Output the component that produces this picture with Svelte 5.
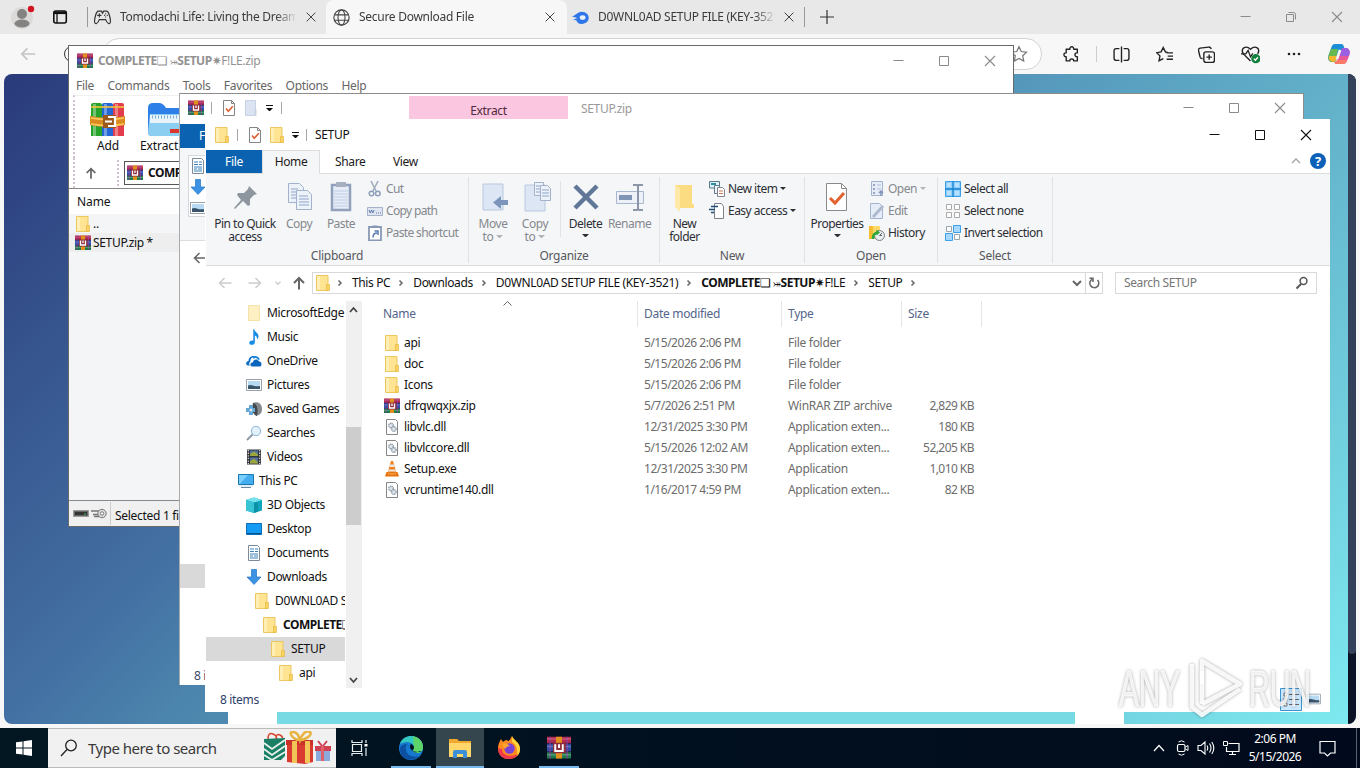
<script>
  const svg = {
    folder: '<path d="M1.500.500h11.500v15H1.500z" fill="#ffe493" stroke="#ecc75e"/><path d="M2 1h3v14H2z" fill="#ffeeb5"/><path d="M11.500 9.500h3v6h-3z" fill="#fbd365" stroke="#e6b840" stroke-width=".7"/>',
    folderPale: '<path d="M2.500.500h11v15h-11z" fill="#fff0c4" stroke="#f5e2ab"/>',
    folderGray: '<path d="M2.500.500h10v15h-10z" fill="#dce4f3" stroke="#c6d2e6"/><path d="M11.500 9h2v6.500h-2z" fill="#c6d2e6"/>',
    rar: '<path fill="#b3294f" d="M0 .500h16v4.500H0z"/><path fill="#2d4fa6" d="M0 5h16v5.500H0z"/><path fill="#1f7a4c" d="M0 10.500h16v4.500H0z"/><path d="M0 5h16M0 10.500h16" stroke="#2c1840" stroke-opacity=".6"/><path d="M2 .500v14.500M13.500.500v14.500" stroke="#8d3aa0" stroke-opacity=".7"/><path d="M0 2h16M0 7h16M0 12.500h16" stroke="#fff" stroke-opacity=".22"/><path fill="#e0901d" d="M6 .500h4v14.500H6z"/><path fill="#8f2d3c" d="M4 4.500h8.500v7H4z"/><path d="M5.500 5.500v4.500h5V5.500M8 5.500v2.500" fill="none" stroke="#fff" stroke-width="1.300"/>',
    check: '<path d="M2.500.500h8l3 3v12h-11z" fill="#fff" stroke="#858585"/><path d="M10.500.500v3h3" fill="none" stroke="#858585"/><path d="M5 8.500l2.300 2.700 4.500-5" fill="none" stroke="#dd6037" stroke-width="1.700"/>',
    music: '<path d="M8 0c.5 3 5 4 4.500 7.500-.2 1.500-.8 2.400-1.400 3 .3-2-.7-3.400-2.200-4V13c0 4-6.200 3.400-5.600.5.300-1.800 2.600-2.500 4-1.800V0z" fill="#168ce5"/>',
    onedrive: '<path d="M2 12.500C-.8 11.700-.3 8.500 2.500 8c0-3 3-6 6.500-4.500C5 4 4 7 4.500 8.500 2.800 9.500 3 12 4 12.500z" fill="#0d6fc5"/><path d="M6 13.500c-2.500-.8-2-4.300 1-4.300.2-3 4.400-3.700 5.800-1 2.500 0 3.800 3.600 1.500 5.300z" fill="#0b65bd"/><path d="M7 5c2-2 5-1 6 1.700" fill="none" stroke="#1883d7" stroke-width="2"/>',
    pictures: '<path d="M.5 2.500h15v11H.5z" fill="#fff" stroke="#98a1aa"/><path d="M2 4h12v8H2z" fill="#b7daf2"/><path d="M2 8.500c4-2 6 2 12 .500v3H2z" fill="#39536a"/>',
    games: '<path d="M7 2c5-2 9 1 9 6s-3 6-6 7z" fill="#858a8f"/><path d="M7 2c2 0 6 3 4 13C8 14 6 11 6 7z" fill="#43494f"/><path d="M0 7h3V4h4v3h2v4H7v3H3v-3H0z" fill="#67a7d4"/><circle cx="5" cy="9" r="1.500" fill="#d2e7f6"/>',
    searches: '<path d="M1 15l6-6" stroke="#8c98a3" stroke-width="1.800"/><circle cx="10" cy="6" r="4.700" fill="#dff0fb" stroke="#8ab5d6"/><path d="M8 5a3 3 0 0 1 3-2" fill="none" stroke="#fff"/>',
    videos: '<path d="M1 .500h14v15H1z" fill="#30353c"/><path d="M4 1.500h8V7H4zM4 8.500h8v6H4z" fill="#52739f"/><path d="M4 5l4-2.500 4 3V7H4zM4 12.500l4-3 4 4v1H4z" fill="#9da63b"/><path d="M2.300 1v14M13.700 1v14" stroke="#e5e5e5" stroke-width="1.200" stroke-dasharray="1.300 1.300"/>',
    pc: '<path d="M.5 1.500h15v10H.5z" fill="#42aef1" stroke="#1978b4"/><path d="M1 2h9l-8 9H1z" fill="#79cdfb"/><path d="M3 14.500h10" stroke="#65889e"/><path d="M1 13h14" stroke="#c8dbe6"/>',
    cube: '<path d="M0 3l8-2.500L16 3v10.500L8 16l-8-2.500z" fill="#10a5bd"/><path d="M0 3l8-2.500L16 3 8 5.500z" fill="#75e4ee"/><path d="M0 3l8 2.500V16l-8-2.500z" fill="#38c4d5"/><path d="M8 5.500h4v9l-4 1.500z" fill="#0b90a8"/>',
    desktop: '<path d="M.5 2.500h15v11H.5z" fill="#169bf5" stroke="#0d6eb5"/><path d="M1 12h14v1H1z" fill="#07558f"/>',
    documents: '<path d="M2.500.500h9l2 2v13h-11z" fill="#fff" stroke="#7d8b98"/><path d="M4 4h4M9 4h3M4 6.500h4M9 6.500h3M4 9h8M4 11h3M8 11h4M4 13h8" stroke="#3982bd"/>',
    downloads: '<path d="M5.500.500h5v7.500H15l-7 7.500L1 8h4.500z" fill="#3c92e4" stroke="#2275c6" stroke-width=".7"/>',
    dll: '<path d="M2.500.500h9l2 2v13h-11z" fill="#fff" stroke="#858585"/><circle cx="7" cy="6.500" r="2.300" fill="#dfe5ea" stroke="#8998a6" stroke-width="1.300" stroke-dasharray="1.200 .5"/><circle cx="9.800" cy="10" r="2.300" fill="#dfe5ea" stroke="#8998a6" stroke-width="1.300" stroke-dasharray="1.200 .5"/>',
    vlc: '<path d="M7 0h2l3.500 12H3.500z" fill="#f3801c"/><path d="M6 3.500h4l.7 2.500H5.300zM4.700 8.500h6.600l.6 2H4.100z" fill="#e9e9e9"/><path d="M2.500 11h11l1.500 4.500H1z" fill="#e9730d"/><path d="M4 12c2 1.500 6 1.500 8 0" fill="none" stroke="#ffb164"/>',
    cut: '<path d="M4 0l5 10M11 0L6 10" stroke="#a3aebd" stroke-width="1.600"/><circle cx="4.500" cy="12.500" r="2.300" fill="none" stroke="#8e9ebd" stroke-width="1.500"/><circle cx="10.800" cy="12.500" r="2.300" fill="none" stroke="#8e9ebd" stroke-width="1.500"/>',
    path: '<path d="M.5 4.500h15v8H.5z" fill="#dfe6f2" stroke="#a4b3cb"/><path d="M2 7l1.300 3 1.200-3 1.300 3L7 7M9 10h1M11 10h1M13 10h1" fill="none" stroke="#617aa8"/>',
    shortcut: '<path d="M2 2h12v13.500H2z" fill="#fff" stroke="#8899b4" stroke-width="1.800"/><path d="M5.500.500h5v2h-5z" fill="#8899b4"/><path d="M6 12.500c0-3 1-4.500 4-4.500M7.500 6h3.500v4" fill="none" stroke="#5a78ae" stroke-width="1.500"/>',
    newitem: '<path d="M.500.500h10v6.500H.500z" fill="#dff1fb" stroke="#5b7887"/><path d="M2 3h5" stroke="#2b8e9b" stroke-width="2"/><path d="M5.500 4.500h5v8h-5z" fill="#eef5fb" stroke="#647a8f"/><path d="M8.500 6.500h5l2 2v7h-7z" fill="#fff" stroke="#85898f"/><path d="M10 10h4M10 12.500h4" stroke="#c9765c"/>',
    easy: '<path d="M5.500.500h7l2 3v12h-9z" fill="#fff" stroke="#7c8287"/><path d="M2 3.500h7M0 6.500h6M2 9.500h3" stroke="#234d73" stroke-width="1.500"/>',
    open: '<path d="M2.500.500h11v14h-11z" fill="#e7edf8" stroke="#a5b4ce"/><path d="M4 3h2v2H4zM4 7h2v2H4zM4 11h2v2H4z" fill="#96a6c4"/><path d="M8 4h4M8 8h4" stroke="#b1bed5"/><path d="M12 15v-5m-2 2l2-2 2 2" fill="none" stroke="#8396ba" stroke-width="1.500"/>',
    edit: '<path d="M1.500.500h9l3 3v12h-12z" fill="#e7edf8" stroke="#a5b4ce"/><path d="M4 14L14 3" stroke="#adb9cc" stroke-width="3"/>',
    history: '<path d="M0 1h11v13H0z" fill="#ffd968"/><path d="M0 1h4v13H0z" fill="#f4bd31"/><circle cx="10.500" cy="10.500" r="5" fill="#e9edf0" stroke="#778087"/><path d="M10.500 10.500l2.500-2.500M10.500 10.500h2.500" fill="none" stroke="#5c6a74"/><path d="M4 14c0-4 1.500-6 4.500-6" fill="none" stroke="#2da63a" stroke-width="2.600"/><path d="M7.500 4.500l3.500 3-3.500 3z" fill="#2da63a"/>',
    selall: '<path d="M.500.500h15v15H.500z" fill="#8dcdff" stroke="#3ba0e8"/><path d="M8 0v16M0 8h16" stroke="#1181cc" stroke-width="1.300"/><path d="M2 2h4v4H2zM10 2h4v4h-4zM2 10h4v4H2zM10 10h4v4h-4z" fill="#b9e1ff"/>',
    selnone: '<g fill="#fff" stroke="#aaa"><path d="M1.500 1.500h5v5h-5zM9.500 1.500h5v5h-5zM1.500 9.500h5v5h-5zM9.500 9.500h5v5h-5z"/></g>',
    selinv: '<g fill="#fff" stroke="#9aa5ae"><path d="M1.500 1.500h5v5h-5zM9.500 9.500h5v5h-5z"/></g><g fill="#a6d7fc" stroke="#3ba0e8"><path d="M8.500.500h7v7h-7zM.500 8.500h7v7h-7z"/></g>',
    up: '<path d="M8 14.500V3M3 8l5-5 5 5" fill="none" stroke="#666" stroke-width="2"/>',
    left: '<path d="M14.500 8H2.500M7.500 3l-5 5 5 5" fill="none" stroke="currentColor" stroke-width="1.500"/>',
    right: '<path d="M1.500 8h12M8.500 3l5 5-5 5" fill="none" stroke="currentColor" stroke-width="1.500"/>',
    down: '<path d="M4 6l4 4 4-4" fill="none" stroke="currentColor" stroke-width="2"/>',
    chev: '<path d="M6.500 5.500L9 8l-2.500 2.500" fill="none" stroke="#666" stroke-width="1.500"/>',
    min: '<path d="M3.500 7.500h10" stroke="currentColor"/>',
    max: '<path d="M3.500 3.500h9v9h-9z" fill="none" stroke="currentColor"/>',
    close: '<path d="M3 3l10 10M13 3L3 13" stroke="currentColor" stroke-width="1.100"/>',
    restore: '<path d="M3.500 5.500h7v7h-7z" fill="none" stroke="currentColor"/><path d="M5.500 3.500h5q2 0 2 2v5" fill="none" stroke="currentColor"/>',
    lens: '<circle cx="9.500" cy="6" r="3.400" fill="none" stroke="#555" stroke-width="1.500"/><path d="M7 9l-4.500 4.500" stroke="#555" stroke-width="2"/>',
    refresh: '<path d="M11.500 5A4.500 4.500 0 1 1 6 4.300M3.500 3.300H7V7" fill="none" stroke="#666" stroke-width="1.500"/>',
    pad: '<path d="M4 2h3l1 2 1-2h3c2 0 3.500 7 3.500 10-.5 3-3 2-4.500-2H5c-1.500 4-4 5-4.500 2C.500 9 2 2 4 2z" fill="none" stroke="#333" stroke-width="1.100"/><path d="M5 4v4M3 6h4M11 4v1M11 7v1M9.500 6h1M12 6h1" stroke="#333"/>',
    globe: '<circle cx="8" cy="8" r="7.200" fill="none" stroke="#444" stroke-width="1.100"/><ellipse cx="8" cy="8" rx="3.300" ry="7.200" fill="none" stroke="#444"/><path d="M1.500 5.500h13M1.500 10.500h13" stroke="#444"/>',
    mf: '<path d="M0 7c3-1 5-4 9-4.500 9 0 9 11.500 0 11.500-3 0-4-1.500-5-3.500l-3-.5 4-1.500z" fill="#2f77e8"/><ellipse cx="10" cy="8" rx="2.700" ry="2.200" fill="#e8f2fd"/>',
    tabs: '<rect x="1.800" y="2" width="12.500" height="12" rx="2" fill="none" stroke="#111" stroke-width="1.600"/><path d="M2 3.800h12" stroke="#111" stroke-width="2.600"/><path d="M5 4v10" stroke="#111" stroke-width="1.300"/>',
    star: '<path d="M8 1.500l2 4.300 4.700.6-3.400 3.200.9 4.700L8 12l-4.200 2.300.9-4.700L1.300 6.400 6 5.800z" fill="none" stroke="#777" stroke-width="1.100"/>',
    puzzle: '<path d="M3 3h3.500C6 0 10.500 0 10 3h3.500v3.500c-3-.5-3 4 0 3.500V14H10c.5-2.500-4-2.500-3.500 0H3v-4C.200 10.500.200 6 3 6.500z" fill="none" stroke="#222" stroke-width="1.300" stroke-linejoin="round"/>',
    split: '<path d="M6 2.500H3Q1 2.500 1 4.500v7q0 2 2 2h3M10 2.500h3q2 0 2 2v7q0 2-2 2h-3M8 .500v15" fill="none" stroke="#222" stroke-width="1.300"/>',
    favs: '<path d="M11 6L9 5.700 6.800 1.500 4.800 5.500.700 6.300l3 3-.800 4.500 4-2M10 6.500h6M11 9.500h5M10 12.500h6" fill="none" stroke="#222" stroke-width="1.300"/>',
    coll: '<rect x="5.500" y="5.500" width="10" height="10" rx="2" fill="none" stroke="#222" stroke-width="1.300"/><path d="M10.500 8v5M8 10.500h5M12.500 3Q12 .800 10 1L2 2Q0 2.500.500 4.500l1.500 6q.500 1.500 2.300 1.300" fill="none" stroke="#222" stroke-width="1.300"/>',
    heart: '<path d="M8 13.500L2 7.500C-1 3 4-.200 8 3.500c4-3.700 9-.500 6 4" fill="none" stroke="#222" stroke-width="1.200"/><path d="M0 7.500h4l2-3 2 5.500 2-3" fill="none" stroke="#222" stroke-width="1.100"/><circle cx="12.500" cy="11.500" r="3.900" fill="#10803c"/><path d="M10.800 11.500l1.300 1.300 2.200-2.500" fill="none" stroke="#fff" stroke-width="1.100"/>',
    dots: '<g fill="#222"><circle cx="3" cy="8" r="1.300"/><circle cx="8" cy="8" r="1.300"/><circle cx="13" cy="8" r="1.300"/></g>',
    drive: '<path d="M.500 4.500h15v6H.500z" fill="#666" stroke="#999"/><path d="M2 6h12v3H2z" fill="#333"/><path d="M11 8h2" stroke="#37c25b"/>',
    key: '<path d="M0 5h8M2 8.500h6M3 10.500h5" fill="none" stroke="#777" stroke-width="1.400"/><circle cx="11" cy="7.500" r="4.200" fill="#ddd" stroke="#777"/><circle cx="11" cy="7.500" r="1.700" fill="#fff" stroke="#777"/>'
  }

  // 32px glyphs of the ribbon
  const big = {
    pin: '<path d="M20 5l8 8-3 1-4 4 0 6-2 1-5-5-8 8-1-1 7-8-4-5 1-2 6 0 4-4z" fill="#8d969e"/>',
    copy: '<g fill="#edf1f8" stroke="#a2b1cc"><path d="M5.500 2.500h11l4 4v15h-15z"/><path d="M13.500 9.500h11l4 4v15h-15z"/></g><path d="M8 8h7M8 11h5M8 14h5M8 17h5M16 15h9M16 18h10M16 21h10M16 24h10" stroke="#8da5cd"/>',
    paste: '<path d="M7 4h18v25H7z" fill="#e5ecf7" stroke="#91a0bb" stroke-width="2.500"/><path d="M11 1h10v5H11z" fill="#a6b0be"/><path d="M9 10h14M9 13h14M9 16h14M9 19h14M9 22h14M9 25h14" stroke="#c0cee5"/>',
    move: '<path d="M6 3h20v26H6z" fill="#dce6f4" stroke="#b9c8df"/><path d="M31 19v5h-7v4l-8-6.500 8-6.500v4z" fill="#7d95ba"/>',
    copyto: '<path d="M6 4h20v26H6z" fill="#dce6f4" stroke="#b9c8df"/><g fill="#edf1f8" stroke="#a2b1cc"><path d="M15.500 1.500h9v13h-9z"/><path d="M21.500 4.500h7l3 3v12h-10z"/></g><path d="M17 5h4M17 8h4M17 11h4M23 9h7M23 12h7M23 15h7" stroke="#8da5cd"/>',
    del: '<path d="M5 5l22 22M27 5L5 27" stroke="#617797" stroke-width="4.500"/>',
    rename: '<path d="M2.500 10.500h27v12h-27z" fill="#eef2f8" stroke="#a7b7cf"/><path d="M5 14h13v5H5z" fill="#8094b5"/><path d="M19 4h4l1 1 1-1h4M19 29h4l1-1 1 1h4M24 5v23" fill="none" stroke="#8b97a8" stroke-width="2"/>',
    newfolder: '<path d="M6 4h17v18l2 2v3H8z" fill="#fbdc83"/><path d="M6 4l5 3v24l-5-5z" fill="#ffe9a9"/>',
    props: '<path d="M5.500 2.500h15l5 5v22h-20z" fill="#fff" stroke="#8a8a8a"/><path d="M20.500 2.500v5h5" fill="none" stroke="#8a8a8a"/><path d="M9 17l5 5 9-10" fill="none" stroke="#e2612f" stroke-width="3"/>'
  }

  const menu = ['File', 'Commands', 'Tools', 'Favorites', 'Options', 'Help']
  const crumbs = ['This PC', 'Downloads', 'D0WNL0AD SETUP FILE (KEY-3521)', 'complete', 'SETUP']

  const nav = [
    { label: 'MicrosoftEdge', icon: 'folderPale', x: 40 },
    { label: 'Music', icon: 'music', x: 40 },
    { label: 'OneDrive', icon: 'onedrive', x: 40 },
    { label: 'Pictures', icon: 'pictures', x: 40 },
    { label: 'Saved Games', icon: 'games', x: 40 },
    { label: 'Searches', icon: 'searches', x: 40 },
    { label: 'Videos', icon: 'videos', x: 40 },
    { label: 'This PC', icon: 'pc', x: 32 },
    { label: '3D Objects', icon: 'cube', x: 40 },
    { label: 'Desktop', icon: 'desktop', x: 40 },
    { label: 'Documents', icon: 'documents', x: 40 },
    { label: 'Downloads', icon: 'downloads', x: 40 },
    { label: 'D0WNL0AD SETUP', icon: 'folder', x: 48 },
    { label: 'COMPLETE', icon: 'folder', x: 56, bold: true },
    { label: 'SETUP', icon: 'folder', x: 64, sel: true },
    { label: 'api', icon: 'folder', x: 72 }
  ]

  const files = [
    ['folder', 'api', '5/15/2026 2:06 PM', 'File folder', ''],
    ['folder', 'doc', '5/15/2026 2:06 PM', 'File folder', ''],
    ['folder', 'Icons', '5/15/2026 2:06 PM', 'File folder', ''],
    ['rar', 'dfrqwqxjx.zip', '5/7/2026 2:51 PM', 'WinRAR ZIP archive', '2,829 KB'],
    ['dll', 'libvlc.dll', '12/31/2025 3:30 PM', 'Application exten...', '180 KB'],
    ['dll', 'libvlccore.dll', '5/15/2026 12:02 AM', 'Application exten...', '52,205 KB'],
    ['vlc', 'Setup.exe', '12/31/2025 3:30 PM', 'Application', '1,010 KB'],
    ['dll', 'vcruntime140.dll', '1/16/2017 4:59 PM', 'Application exten...', '82 KB']
  ]
</script>

{#snippet icon(name, size = 16)}
  <svg class="ic" width={size} height={size} viewBox="0 0 16 16">{@html svg[name]}</svg>
{/snippet}

{#snippet tool(name, label, width, arrow = false, off = false)}
  <div class="tool" class:off class:narrow={arrow === 'inline'} style="width:{width}px">
    <svg class="ic" width="32" height="32" viewBox="0 0 32 32">{@html big[name]}</svg>
    <span>{label}{#if arrow === 'inline'}<i class="caret"></i>{/if}</span>
    {#if arrow === 'below'}<i class="caret"></i>{/if}
  </div>
{/snippet}

{#snippet small(name, label, off = false, arrow = false)}
  <div class="small" class:off>{@render icon(name)}<span>{label}</span>{#if arrow}<i class="caret"></i>{/if}</div>
{/snippet}

{#snippet controls()}
  <div class="controls">
    <span>{@render icon('min')}</span><span>{@render icon('max')}</span><span>{@render icon('close')}</span>
  </div>
{/snippet}

{#snippet fancy()}<b>COMPLETE</b><span class="sym">❏</span> <span class="sym arrow">⤖</span><b>SETUP</b><span class="sym">✷</span>F!LE{/snippet}

<div class="screen">
  <div class="tabstrip">
    <svg class="avatar" width="24" height="26" viewBox="0 0 24 26">
      <circle cx="11" cy="14" r="11" fill="#dcdad8" /><circle cx="11" cy="10" r="5" fill="#858381" />
      <ellipse cx="11" cy="19.500" rx="7.500" ry="4" fill="#858381" /><circle cx="20" cy="5" r="3.200" fill="#d41222" />
    </svg>
    <span class="tabsicon">{@render icon('tabs')}</span>
    <i class="tsep"></i>
    <div class="tab first">{@render icon('pad', 17)}<span>Tomodachi Life: Living the Dream</span>{@render icon('close', 14)}</div>
    <div class="tab active">{@render icon('globe', 17)}<span>Secure Download File</span>{@render icon('close', 14)}</div>
    <div class="tab last">{@render icon('mf', 17)}<span>D0WNL0AD SETUP FILE (KEY-3521)</span>{@render icon('close', 14)}</div>
    <i class="tsep"></i>
    <svg class="plus" width="14" height="14" viewBox="0 0 14 14"><path d="M7 0v14M0 7h14" stroke="#333" stroke-width="1.200" /></svg>
    <div class="controls">
      <span>{@render icon('min')}</span><span>{@render icon('restore')}</span><span>{@render icon('close')}</span>
    </div>
  </div>

  <div class="toolbar">
    <span class="back">{@render icon('left', 18)}</span>
    <i class="reload"></i>
    <div class="pill">{@render icon('star', 18)}</div>
    <div class="edge-tools">
      {@render icon('puzzle', 17)}
      <i class="sep"></i>
      {@render icon('split', 17)}
      {@render icon('favs', 17)}
      {@render icon('coll', 17)}
      {@render icon('heart', 19)}
      {@render icon('dots', 16)}
      <svg width="22" height="22" viewBox="0 0 22 22">
        <path d="M7 1h6c2 0 2.500 1 3 3l1 3h-5L8 17c-.500 2-1.500 2-3 2C0 19-.500 15 1 11L3.500 4C4.200 2 5 1 7 1z" fill="#1c8ed8" />
        <path d="M1 11l2-5h7L8 17c-.500 2-1.500 2-3 2-5 0-5.500-4-4-8z" fill="#67b950" /><path d="M1 13h8l-1 4c-1 3-6 2-7-1z" fill="#f4b62f" />
        <path d="M14 5h3c5 0 5.500 4 4 8l-2 5c-.700 2-2 3-4 3H9c-2 0-2.500-1-2.500-2 2 0 2.500-1 3-3z" fill="#e8579a" />
        <path d="M14 5h3c5 0 5.500 4 4 8h-9z" fill="#9b60e2" /><path d="M9 17h10c-.800 3-2 4-4 4H9c-2 0-2.500-1-2.500-2 1.500 0 2-1 2.500-2z" fill="#fb7a66" />
        <path d="M12 7l-3 9" stroke="#f7f7f7" stroke-width="2.500" />
      </svg>
    </div>
  </div>

  <div class="page">
    <div class="card"><div></div></div>
    <div class="pagescroll"><i></i></div>
  </div>

  <div class="window winrar">
    <div class="title">{@render icon('rar')}<span>{@render fancy()}<em>.zip</em></span>{@render controls()}</div>
    <div class="menu">{#each menu as m}<span>{m}</span>{/each}</div>
    <div class="wtools">
      <div>
        <svg width="36" height="36" viewBox="0 0 36 36">
          <path d="M1 3q0-2 2-2h7q2 0 2 2v31H1z" fill="#27a32b" /><path d="M12 3q0-2 2-2h7q2 0 2 2v31H12z" fill="#2367d7" /><path d="M23 3q0-2 2-2h7q2 0 2 2v31H23z" fill="#e03c4b" />
          <path d="M3 2h3v32H3zM14 2h3v32h-3zM25 2h3v32h-3z" fill="#fff" opacity=".35" />
          <path d="M1 4h33v2H1z" fill="#f4c33b" opacity=".8" />
          <path d="M0 14q17 3 35 0v9q-18 4-35 0z" fill="#d98a21" /><path d="M1 16q17 3 33 0M1 22q17 3 33 0" fill="none" stroke="#ffc95a" stroke-width="1.500" />
          <path d="M13 13h13v13H13z" fill="#9b5a1c" /><path d="M18 15h7v9h-7M15 19.500h7" fill="none" stroke="#fff" stroke-width="2.200" />
        </svg>
        <span>Add</span>
      </div>
      <div class="extract">
        <svg width="44" height="36" viewBox="0 0 44 36">
          <path d="M1 6q0-5 5-5h6q4 0 7 5h25v28H5q-4 0-4-4z" fill="#2f7fe8" /><path d="M3 12h41v22H5q-4 0-4-4z" fill="#8ccdf2" />
          <path d="M3 13h41v8H3z" fill="#e9f3fb" /><path d="M5 15h39" stroke="#7daed0" stroke-width="3" stroke-dasharray="1 2" /><path d="M23 29h12" stroke="#d9362e" stroke-width="4" />
        </svg>
        <span>Extract To</span>
      </div>
    </div>
    <div class="waddr"><span>{@render icon('up', 14)}</span><div>{@render icon('rar')}<b>COMPLETE</b></div></div>
    <div class="wlist">
      <div class="whead">Name</div>
      <div class="wrow">{@render icon('folder')}..</div>
      <div class="wrow sel">{@render icon('rar')}SETUP.zip *</div>
    </div>
    <div class="wstatus">{@render icon('drive')}{@render icon('key')}<i></i><span>Selected 1 file</span></div>
  </div>

  <div class="window zip">
    <div class="title">
      {@render icon('rar')}<i class="sep"></i>{@render icon('check')}{@render icon('folderGray')}<i class="caret bar"></i><i class="sep"></i>
      <div class="pink">Extract</div><span>SETUP.zip</span>{@render controls()}
    </div>
    <div class="ziptabs"><div>File</div></div>
    <div class="zipribbon"><div>{@render icon('documents')}{@render icon('downloads')}{@render icon('pictures')}</div></div>
    <div class="zipnav">{@render icon('left')}</div>
    <div class="zipbody"><div></div></div>
    <div class="zipstatus">8 items</div>
  </div>

  <div class="window front">
    <div class="title">
      {@render icon('folder')}<i class="sep"></i>{@render icon('check')}{@render icon('folder')}<i class="caret bar"></i><i class="sep"></i>
      <span>SETUP</span>{@render controls()}
    </div>
    <div class="tabs">
      <div class="file">File</div><div class="home">Home</div><div class="share">Share</div><div class="view">View</div>
      <svg class="fold" width="10" height="10" viewBox="0 0 10 10"><path d="M1 7l4-4 4 4" fill="none" stroke="#a5a5a5" stroke-width="1.400" /></svg>
      <span class="help">?</span>
    </div>
    <div class="ribbon">
      <div class="group" style="width:263px">
        <div class="items">
          {@render tool('pin', 'Pin to Quick access', 78)}
          {@render tool('copy', 'Copy', 30, false, true)}
          {@render tool('paste', 'Paste', 54, false, true)}
          <div class="stack tight">
            {@render small('cut', 'Cut', true)}
            {@render small('path', 'Copy path', true)}
            {@render small('shortcut', 'Paste shortcut', true)}
          </div>
        </div>
        <div class="label">Clipboard</div>
      </div>
      <div class="group" style="width:191px">
        <div class="items">
          <i style="width:3px"></i>
          {@render tool('move', 'Move to', 42, 'inline', true)}
          {@render tool('copyto', 'Copy to', 42, 'inline', true)}
          <i class="gsep"></i>
          {@render tool('del', 'Delete', 45, 'below')}
          {@render tool('rename', 'Rename', 43, false, true)}
        </div>
        <div class="label">Organize</div>
      </div>
      <div class="group" style="width:145px">
        <div class="items">
          {@render tool('newfolder', 'New folder', 49)}
          <div class="stack">
            {@render small('newitem', 'New item', false, true)}
            {@render small('easy', 'Easy access', false, true)}
          </div>
        </div>
        <div class="label">New</div>
      </div>
      <div class="group" style="width:133px">
        <div class="items">
          {@render tool('props', 'Properties', 64, 'below')}
          <div class="stack">
            {@render small('open', 'Open', true, true)}
            {@render small('edit', 'Edit', true)}
            {@render small('history', 'History')}
          </div>
        </div>
        <div class="label">Open</div>
      </div>
      <div class="group" style="width:115px">
        <div class="items">
          <i style="width:7px"></i>
          <div class="stack">
            {@render small('selall', 'Select all')}
            {@render small('selnone', 'Select none')}
            {@render small('selinv', 'Invert selection')}
          </div>
        </div>
        <div class="label">Select</div>
      </div>
    </div>

    <div class="address">
      <span class="nb">{@render icon('left')}</span><span class="nf">{@render icon('right')}</span><span class="nd">{@render icon('down', 10)}</span>
      <span class="nu">{@render icon('up')}</span>
      <div class="path">
        {@render icon('folder')}
        {@render icon('chev')}
        {#each crumbs as c}
          <span class="crumb">{#if c === 'complete'}{@render fancy()}{:else}{c}{/if}</span>{@render icon('chev')}
        {/each}
        <div class="drop">{@render icon('down')}</div>
        <div class="re">{@render icon('refresh')}</div>
      </div>
      <div class="search"><span>Search SETUP</span>{@render icon('lens')}</div>
    </div>

    <div class="body">
      <div class="nav">
        {#each nav as n}
          <div class="item" class:sel={n.sel} class:bold={n.bold} style="padding-left:{n.x}px">{@render icon(n.icon)}<span>{n.label}{#if n.bold}<span class="sym">❏</span>{/if}</span></div>
        {/each}
      </div>
      <div class="scroll">
        <svg width="15" height="17" viewBox="0 0 15 17"><path d="M4 11l3.500-4 3.500 4" fill="none" stroke="#444" stroke-width="1.800" /></svg>
        <i></i>
        <svg width="15" height="17" viewBox="0 0 15 17"><path d="M4 7l3.500 4L11 7" fill="none" stroke="#444" stroke-width="1.800" /></svg>
      </div>
      <div class="list">
        <div class="cols">
          <span class="c1">Name<svg width="9" height="5" viewBox="0 0 9 5"><path d="M.500 4.500l4-4 4 4" fill="none" stroke="#666" /></svg></span>
          <span class="c2">Date modified</span><span class="c3">Type</span><span class="c4">Size</span>
        </div>
        {#each files as [ic, name, date, type, size]}
          <div class="row"><span class="r1">{@render icon(ic)}{name}</span><span class="r2">{date}</span><span class="r3">{type}</span><span class="r4">{size}</span></div>
        {/each}
      </div>
    </div>
    <div class="status">
      <span>8 items</span>
      <svg width="22" height="23" viewBox="0 0 22 23"><path d="M.500.500h21v22H.500z" fill="#cce8ff" stroke="#3a94cf" /><path d="M4 5h3v3H4zM4 10h3v3H4zM4 15h3v3H4z" fill="#fff" stroke="#777" /><path d="M9 6.500h5M15 6.500h4M9 11.500h5M15 11.500h4M9 16.500h5M15 16.500h4" stroke="#666" /></svg>
      {@render icon('pictures', 14)}
    </div>
  </div>

  <svg class="watermark" width="200" height="66" viewBox="0 0 200 66">
    <g fill="#fff" fill-opacity=".8" stroke="#fff" stroke-opacity=".8" stroke-width=".8">
      <text x="2" y="52" font-size="50" textLength="61" lengthAdjust="spacingAndGlyphs">ANY</text>
      <text x="132" y="52" font-size="50" textLength="62" lengthAdjust="spacingAndGlyphs">RUN</text>
    </g>
    <g fill="none" stroke="#fff" stroke-opacity=".9" stroke-width="4.500" stroke-linejoin="round">
      <path d="M85 30V7l38 23-38 20" /><path d="M75 10v43l10 8 38-26" /><path d="M85 17v33" />
    </g>
  </svg>

  <div class="taskbar">
    <div class="start"><svg width="16" height="16" viewBox="0 0 16 16"><path d="M0 2.300l6.500-.9v6.100H0zM7.500 1.200L16 0v7.500H7.500zM0 8.500h6.500v6.100L0 13.700zM7.500 8.500H16V16l-8.500-1.200z" fill="#fff" /></svg></div>
    <div class="tsearch">
      <svg width="18" height="18" viewBox="0 0 18 18"><circle cx="11" cy="6.500" r="5.300" fill="none" stroke="#222" stroke-width="1.300" /><path d="M7 10.500L1 17" stroke="#222" stroke-width="1.300" /></svg>
      <span>Type here to search</span>
      <svg width="70" height="34" viewBox="0 0 70 34">
        <path d="M5 8q0-7 5-5t3 6M13 8q0-6 4-4t2 5" fill="none" stroke="#d8452f" stroke-width="1.500" /><path d="M1 8l21-1v18l-4 4L1 29z" fill="#1b7f65" />
        <path d="M1 12l8 6L22 9M1 18l8 6 13-9M1 24l8 5 13-8" fill="none" stroke="#e9f3ee" stroke-width="1.800" />
        <path d="M24 12h26v19l-8 2-18-2z" fill="#d93b31" /><path d="M23 9h27v5H23z" fill="#c93029" /><path d="M29 10h5v22h-5zM42 10h5v22h-5z" fill="#f1c558" />
        <path d="M37 9c-8 0-12-9-7-8 4 0 6 4 7 8 2-6 6-10 10-8 3 3-5 8-10 8z" fill="none" stroke="#e8b341" stroke-width="2.500" />
        <path d="M53 17h14v13H53z" fill="#8aa9dc" /><path d="M52 15h16v5H52z" fill="#cf4052" /><path d="M58 15h3v15h-3z" fill="#e0606a" /><path d="M59 15l-4-5M60 15l4-5" stroke="#cf4052" stroke-width="2" />
      </svg>
    </div>
    <div class="app"><svg width="18" height="18" viewBox="0 0 18 18"><path d="M1 1v2.500h10V1M1 17v-2.500h10V17M1.500 5.500h9v7h-9zM15 1v3M15 9v8" fill="none" stroke="#e8eef0" stroke-width="1.200" /><path d="M13.500 5h3v2.500h-3z" fill="#fff" /></svg></div>
    <div class="app run">
      <svg width="26" height="26" viewBox="0 0 26 26">
        <circle cx="13" cy="13" r="12" fill="#1678ce" /><path d="M2 9C4 3 9 1 13 1c7 0 12 5 12 11 0 5-5 7-9 5-2-1-1-2 0-4 1-3-3-6-7-6-3 0-5 1-7 2z" fill="#35c8c0" />
        <path d="M15 1.200c6 1 10 5 10 11 0 5-5 7-9 5-2-1 0-2 0-4z" fill="#5cd46a" /><path d="M9 9c-4 7 2 15 12 12-7 7-20 3-19-8 1-3 4-4 7-4z" fill="#0d4fa0" />
        <path d="M16 17c-2-1-1-2 0-4 0-2-1-3-3-4-3 3 0 9 10 8l-1-1c-2 1-4 2-6 1z" fill="#021521" />
      </svg>
    </div>
    <div class="app run on">
      <svg width="24" height="22" viewBox="0 0 24 22"><path d="M1 2h8l2 2h12v16H1z" fill="#f0a92e" /><path d="M1 6h22v14H1z" fill="#ffd76b" /><path d="M5 21v-6q0-2 2-2h10q2 0 2 2v6h-4v-4H9v4z" fill="#3a8fd8" /></svg>
    </div>
    <div class="app">
      <svg width="24" height="24" viewBox="0 0 24 24"><path d="M12 23C5 23 1 18 1 12c0-4 2-7 3-9l2 3c1-1 2-2 4-2l1 1c2 0 3-4 4-5 1 4 8 6 8 13 0 6-5 10-11 10z" fill="#ff8a1d" /><path d="M15 0c1 4 8 6 8 13 0 3-1 5-3 7 1-7-1-12-5-14z" fill="#ffd43a" /><path d="M1 12c0 7 4 11 11 11 4 0 7-2 9-5-5 3-16 3-16-5z" fill="#f0384c" /><circle cx="12.500" cy="12.500" r="5.200" fill="#7a43d6" /><path d="M5 8c3-1 6 0 8 2-2 0-4 1-5 3z" fill="#ffa632" /></svg>
    </div>
    <div class="app run">{@render icon('rar', 24)}</div>
    <div class="tray">
      <svg width="12" height="8" viewBox="0 0 12 8"><path d="M1 7l5-5.500L11 7" fill="none" stroke="#fff" stroke-width="1.200" /></svg>
      <svg width="14" height="16" viewBox="0 0 14 16"><rect x="1.500" y="4.500" width="7.500" height="7" rx="1.500" fill="none" stroke="#fff" stroke-width="1.200" /><path d="M9.500 7l2.500-1.500v5L9.500 9M2.500 2Q5.500-.500 8.500 2M2.500 14q3 2.500 6 0" fill="none" stroke="#fff" /></svg>
      <svg width="18" height="16" viewBox="0 0 18 16"><path d="M1 5.500h3l4-3.500v12l-4-3.500H1zM10 5.500q1.500 2.500 0 5M12.500 3.500q3 4.500 0 9M14.800 2q4 6 0 12" fill="none" stroke="#fff" stroke-width="1.100" /></svg>
      <svg width="17" height="15" viewBox="0 0 17 15"><path d="M5.500 2.500h10.500v8H3.500V6M9.500 11v3M6 13.500h7" fill="none" stroke="#fff" stroke-width="1.200" /><path d="M.500.500h4v4h-4z" fill="#021020" stroke="#fff" /></svg>
      <div class="clock"><span>2:06 PM</span><span>5/15/2026</span></div>
      <svg width="17" height="17" viewBox="0 0 17 17"><path d="M1 1.500h15v11.500h-4.500l-3 3-3-3H1z" fill="none" stroke="#fff" stroke-width="1.200" /></svg>
    </div>
  </div>
</div>

<style>
  :global(body) { margin: 0; overflow: hidden; }
  .screen {
    position: relative; width: 1360px; height: 768px; overflow: hidden; background: #f7f7f7;
    font: 12px/16px "Noto Sans", "Open Sans", "DejaVu Sans", sans-serif; letter-spacing: -0.33px; color: #1b1b1b;
    display: flex; flex-direction: column; white-space: nowrap;
  }
  .screen * { box-sizing: border-box; }
  svg { display: block; flex: none; }
  i { display: block; flex: none; }
  b { letter-spacing: -0.5px; }

  /* browser */
  .tabstrip { height: 34px; flex: none; background: #e8e8e8; display: flex; align-items: center; color: #3b3b3b; letter-spacing: -0.28px; }
  .avatar { margin-left: 11px; }
  .tabsicon { margin-left: 17px; }
  .tsep { width: 1px; height: 20px; background: #999; }
  .tabsicon + .tsep { margin-left: 19px; }
  .tab { display: flex; align-items: center; height: 34px; }
  .tab span { overflow: hidden; flex: none; margin-left: 9px; margin-right: auto; mask-image: linear-gradient(90deg, #000 88%, transparent); }
  .tab.first { width: 238px; padding: 0 8px 0 6px; }
  .tab.first span { width: 177px; }
  .tab.active { width: 241px; background: #f7f7f7; border-radius: 8px 8px 0 0; padding: 0 10px 0 7px; }
  .tab.active span { width: 180px; }
  .tab.last { width: 237px; padding: 0 8px 0 5px; }
  .tab.last span { width: 178px; }
  .plus { margin-left: 15px; }
  .controls { display: flex; margin-left: auto; color: #8a8a8a; }
  .controls span { width: 46px; display: flex; justify-content: center; }

  .toolbar { height: 40px; flex: none; display: flex; align-items: center; }
  .back { margin-left: 19px; color: #c5c5c5; }
  .reload { width: 16px; height: 16px; border: 1.5px solid #333; border-radius: 50%; margin-left: 27px; }
  .pill { width: 939px; height: 32px; margin-left: 23px; border: 1px solid #d3d3d3; border-radius: 16px; background: #fff; display: flex; align-items: center; justify-content: flex-end; padding-right: 13px; }
  .edge-tools { display: flex; align-items: center; justify-content: space-between; width: 287px; margin-left: 21px; }
  .edge-tools .sep { width: 1px; height: 16px; background: #ccc; margin: 0 -10px; }

  .page {
    height: 650px; flex: none; margin: 0 4px; border-radius: 8px; overflow: hidden; display: flex; align-items: flex-end;
    background: linear-gradient(135deg, #2a3a7b, #4472a4 33%, #4b84ac 40%, #5597bb 51%, #62b0c9 67%, #7eeaf0);
  }
  .card { width: 896px; height: 300px; margin-left: 224px; background: #fff; padding: 0 49px; }
  .card div { height: 100%; background: #78dae3; }
  .pagescroll { width: 8px; height: 100%; margin-left: auto; background: #0b1226; }
  .pagescroll i { height: 580px; background: #35415a; border-radius: 0 0 4px 4px; }

  /* windows on the desktop */
  .window { position: absolute; background: #fff; display: flex; flex-direction: column; overflow: hidden; }
  .title { display: flex; align-items: center; flex: none; }
  .title .sep { width: 1px; height: 12px; background: #a5a5a5; }
  .caret { border: 3.500px solid transparent; border-top-color: currentColor; border-bottom: 0; width: 7px; height: 4px; }
  .caret.bar { position: relative; color: #111; margin-top: 4px; }
  .caret.bar::before { content: ""; position: absolute; left: -3.500px; top: -6px; width: 7px; height: 1px; background: #111; }
  .sym { font-family: "DejaVu Sans", sans-serif; font-size: 12px; font-weight: 400; letter-spacing: -0.5px; line-height: 1; }
  .sym.arrow { font-size: 10px; }

  .winrar { left: 68px; top: 45px; width: 946px; height: 482px; border: 1px solid #6a6a6a; }
  .winrar .title { height: 29px; padding-left: 8px; color: #929292; }
  .winrar .title > span { margin-left: 5px; padding-top: 1px; }
  .winrar em { font-style: normal; }
  .menu { display: flex; gap: 13.500px; height: 20px; padding: 3px 0 0 7px; color: #666; }
  .wtools { display: flex; height: 63px; margin-left: 4px; padding: 6px 0 0 14px; border-left: 2px dotted #d3bfd3; border-top: 1px solid #f0f0f0; }
  .wtools > div { width: 38px; display: flex; flex-direction: column; align-items: center; color: #111; letter-spacing: -0.1px; }
  .wtools .extract { width: 64px; margin-left: 16px; align-items: flex-start; padding-left: 4px; }
  .extract span { margin-left: -7px; }
  .waddr { display: flex; height: 30px; margin-left: 4px; padding-left: 9px; border-left: 2px dotted #d3bfd3; align-items: center; }
  .waddr > span { width: 35px; height: 26px; border-right: 2px dotted #d3bfd3; display: flex; align-items: center; }
  .waddr > div { margin-left: 5px; width: 700px; height: 24px; border: 1px solid #555; display: flex; align-items: center; gap: 5px; padding: 0 0 0 2px; color: #111; }
  .wlist { height: 313px; border: solid #888; border-width: 1px 0; background: #f4f5f7; color: #111; }
  .whead { height: 25px; background: #fff; padding: 5px 8px; letter-spacing: -0.1px; }
  .wrow { display: flex; align-items: center; height: 19px; padding-left: 6px; gap: 2px; }
  .wrow.sel { background: #eee; }
  .wstatus { display: flex; height: 25px; background: #f0f0f0; padding: 0 3px 0 4px; gap: 2px; align-items: center; color: #111; }
  .wstatus i { width: 1px; height: 23px; background: #ccc; margin: 0 2px 0 1px; }
  .wstatus span { padding-top: 4px; letter-spacing: -0.3px; }

  .zip { left: 179px; top: 93px; width: 1125px; height: 592px; border: 1px solid #8c8c8c; border-left-color: #aaa; border-bottom: 0; }
  .zip .title { height: 27px; padding-left: 8px; color: #999; }
  .zip .title > .sep { margin-left: 7px; }
  .zip .title > .sep ~ :global(.ic) { margin-left: 9px; }
  .zip .title > :global(.ic + .ic) { margin-left: 6px !important; }
  .zip .title .caret { margin-left: 7px; }
  .zip .caret + .sep { margin-left: 8px !important; }
  .pink { width: 159px; height: 23px; background: #fbc6df; color: #502a40; text-align: center; padding-top: 7px; margin: 0 0 1px 127px; line-height: 15px; }
  .pink + span { margin-left: 13px; padding-top: 2px; }
  .ziptabs { height: 27px; padding-top: 3px; }
  .ziptabs div { height: 24px; width: 56px; background: #0b62b0; color: #fff; padding: 4px 0 0 19px; }
  .zipribbon { height: 93px; background: #f5f6f7; border-bottom: 1px solid #ddd; padding: 7px 8px; }
  .zipribbon div { display: flex; flex-direction: column; gap: 5px; width: 200px; height: 62px; border: 1px solid #d5d8dc; padding: 2px 0 0 1px; background: #fff; }
  .zipnav { height: 35px; padding: 9px 12px; color: #666; }
  .zipbody { height: 392px; padding-top: 288px; }
  .zipbody div { width: 130px; height: 24px; background: #d9d9d9; }
  .zipstatus { padding: 1px 14px; color: #3c4a68; }

  .front { left: 205px; top: 119px; width: 1125px; height: 593px; padding-left: 1px; }
  .front .title { height: 31px; padding-left: 8px; }
  .front .title > .sep { margin-left: 7px; }
  .front .title > .sep ~ :global(.ic) { margin-left: 9px; }
  .front .title > :global(.ic + .ic) { margin-left: 6px !important; }
  .front .title .caret { margin-left: 7px; }
  .front .title .caret + .sep { margin-left: 7px; }
  .front .title > span { margin-left: 8px; color: #111; }
  .front .controls { color: #111; margin-right: 1px; }
  .tabs { display: flex; height: 24px; flex: none; line-height: 24px; letter-spacing: -0.35px; border-bottom: 1px solid #dcdddf; }
  .file { width: 56px; background: #0b62b0; color: #fff; text-align: center; }
  .home { width: 58px; height: 24px; background: #f5f6f7; border: solid #dcdddf; border-width: 1px 1px 0; text-align: center; line-height: 22px; }
  .share { padding-left: 15px; width: 73px; }
  .view { width: 40px; }
  .fold { margin: 6px 9px 0 auto; }
  .help { width: 16px; height: 16px; margin: 3px 4px 0 0; border-radius: 50%; background: #0d60b8; color: #fff; font-weight: 700; line-height: 16px; text-align: center; font-size: 13px; letter-spacing: 0; }

  .ribbon { display: flex; flex: none; height: 92px; background: #f5f6f7; border-bottom: 1px solid #dcdddf; color: #2c2f36; letter-spacing: -0.52px; }
  .group { display: flex; flex-direction: column; border-right: 1px solid #e0e2e5; margin: 3px 0 2px; flex: none; }
  .items { display: flex; height: 70px; flex: none; }
  .label { text-align: center; color: #55585e; line-height: 16px; padding-top: 1px; margin-bottom: -2px; letter-spacing: -0.25px; }
  .tool { display: flex; flex-direction: column; align-items: center; flex: none; padding-top: 4px; text-align: center; line-height: 13px; }
  .tool span { margin-top: 4px; white-space: normal; display: block; }
  .tool.narrow span { width: 34px; letter-spacing: -0.4px; }
  .tool span .caret { display: inline-block; vertical-align: 2px; margin-left: 3px; border-width: 3px; border-bottom: 0; }
  .tool > .caret { margin-top: 4px; }
  .off { color: #85888e; }
  .off .caret { opacity: .6; }
  .gsep { width: 1px; height: 56px; background: #e0e2e5; margin: 4px 2px 0 4px; }
  .stack { padding-top: 1px; }
  .stack.tight { letter-spacing: -0.65px; margin-left: -1px; }
  .small { display: flex; align-items: center; gap: 3px; height: 22px; }
  .small .caret { margin-left: 0; width: 6px; border-width: 3px; border-bottom: 0; }

  .address { display: flex; align-items: center; flex: none; height: 34px; color: #111; letter-spacing: -0.37px; }
  .nb { margin-left: 11px; color: #ccc; }
  .nf { margin-left: 14px; color: #ccc; }
  .nd { margin-left: 10px; color: #ccc; }
  .nu { margin-left: 8px; }
  .path { display: flex; align-items: center; width: 791px; height: 22px; border: 1px solid #d9d9d9; margin-left: 5px; padding-left: 2px; }
  .path > :global(.ic + .ic) { margin-left: 1px; }
  .crumb { margin: 0 3px 0 4px; }
  .drop { margin-left: auto; color: #666; }
  .re { width: 17px; height: 20px; border-left: 1px solid #d9d9d9; padding-top: 2px; }
  .search { display: flex; align-items: center; justify-content: space-between; width: 202px; height: 22px; border: 1px solid #d9d9d9; margin-left: 12px; padding: 0 6px 0 8px; color: #767676; }

  .body { display: flex; height: 388px; flex: none; padding-top: 1px; }
  .nav { width: 139px; overflow: hidden; color: #111; }
  .item { display: flex; align-items: center; height: 24px; gap: 5px; }
  .item.sel { background: #d9d9d9; }
  .item.bold { font-weight: 700; letter-spacing: -0.5px; }
  .scroll { width: 16px; height: 387px; margin-left: 1px; background: #f0f0f0; display: flex; flex-direction: column; justify-content: space-between; }
  .scroll i { width: 15px; height: 98px; background: #cdcdcd; margin-top: 90px; margin-bottom: 127px; }
  .list { width: 960px; }
  .cols { display: flex; height: 26px; line-height: 26px; color: #53658a; letter-spacing: -0.3px; margin-bottom: 5px; }
  .cols span { border-right: 1px solid #e5e5e5; flex: none; padding-left: 6px; }
  .cols .c1 { position: relative; width: 276px; padding-left: 21px; }
  .c1 svg { position: absolute; left: 141px; top: 0; }
  .c2 { width: 144px; }
  .c3 { width: 120px; }
  .c4 { width: 80px; }
  .row { display: flex; height: 21px; line-height: 22px; color: #6d6d6d; letter-spacing: -0.3px; }
  .r1 { display: flex; align-items: center; gap: 4px; width: 282px; padding-left: 22px; color: #111; }
  .r2 { width: 144px; letter-spacing: -0.48px; }
  .r3 { width: 114px; }
  .r4 { width: 72px; text-align: right; letter-spacing: -0.55px; }
  .status { display: flex; align-items: center; height: 24px; color: #2d4068; padding: 0 9px 0 14px; }
  .status > span { margin-right: auto; }
  .status svg { margin-right: 5px; margin-bottom: 2px; }
  .status > :global(.ic) { margin-right: 0; }

  .watermark { position: absolute; left: 1117px; top: 654px; font-family: "Liberation Sans", sans-serif; letter-spacing: 0; filter: drop-shadow(0 0 1.500px rgba(0, 0, 0, 0.4)); }

  /* taskbar */
  .taskbar { position: absolute; left: 0; right: 0; bottom: 0; height: 40px; display: flex; background: linear-gradient(90deg, #021722, #010a1c); color: #fff; }
  .start { width: 48px; display: flex; align-items: center; justify-content: center; }
  .tsearch { width: 288px; background: #f1f1f1; border: solid #bbb; border-width: 1px 0; display: flex; align-items: center; padding-left: 12px; color: #3a3a3a; font-size: 15px; letter-spacing: -0.5px; }
  .tsearch span { margin: 0 auto 0 10px; }
  .tsearch svg:last-child { margin-right: 3px; }
  .app { width: 48px; margin-right: 1px; display: flex; align-items: center; justify-content: center; }
  .run { box-shadow: inset 0 -2px #76b9ed; width: 40px; margin: 0 5px 0 5px; }
  .run.on { width: 48px; margin: 0 1px 0 0; background: #36464f; }
  .app.run:nth-child(4) { margin-left: 6px; }
  .tray { display: flex; align-items: center; margin-left: auto; gap: 8px; padding-right: 20px; border-right: 1px solid #59636d; margin-right: 3px; }
  .tray svg:first-child { margin-right: 3px; }
  .tray svg:nth-child(3) { margin-left: -1px; }
  .clock { display: flex; flex-direction: column; align-items: center; width: 56px; line-height: 18px; letter-spacing: -0.5px; margin: 0 8px 0 -1px; }
</style>
